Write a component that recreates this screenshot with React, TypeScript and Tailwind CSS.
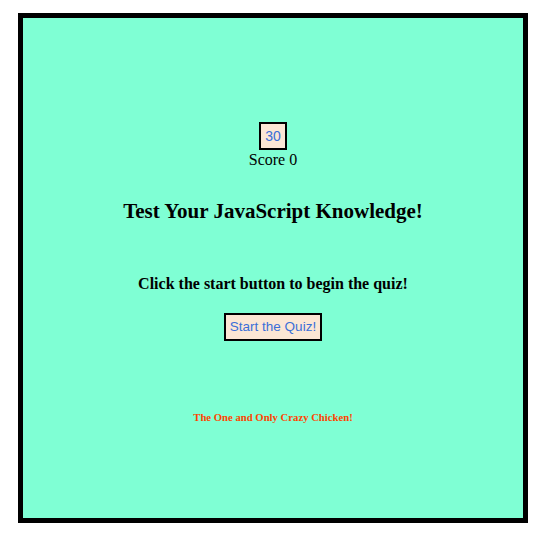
export default function App() {
  return (
    <div className="w-[560px] h-[546px] bg-white pt-[13px] pl-[18px]">
      <div
        className="w-[510px] h-[510px] border-[5px] border-black bg-[#7fffd4] flex flex-col items-center"
        style={{ fontFamily: '"Liberation Serif", serif' }}
      >
        <div className="mt-[104px] w-[28px] h-[28px] border-2 border-black bg-[#fbe6d4] flex items-center justify-center text-[14px] text-[#3a6fd8]" style={{ fontFamily: '"Liberation Sans", sans-serif' }}>
          30
        </div>
        <div className="text-[16px] leading-[18px] mt-[1px] text-black">Score 0</div>
        <h2 className="mt-[30px] text-[21px] leading-[25px] font-bold text-black">Test Your JavaScript Knowledge!</h2>
        <p className="mt-[50px] text-[16px] leading-[20px] font-bold text-black">Click the start button to begin the quiz!</p>
        <button className="mt-[19px] h-[28px] px-[4px] border-2 border-black bg-[#fbe6d4] text-[13.5px] text-[#3a6fd8]" style={{ fontFamily: '"Liberation Sans", sans-serif' }}>
          Start the Quiz!
        </button>
        <p className="mt-[69px] text-[10.7px] leading-[14px] font-bold text-[#ff4500]">The One and Only Crazy Chicken!</p>
      </div>
    </div>
  );
}
